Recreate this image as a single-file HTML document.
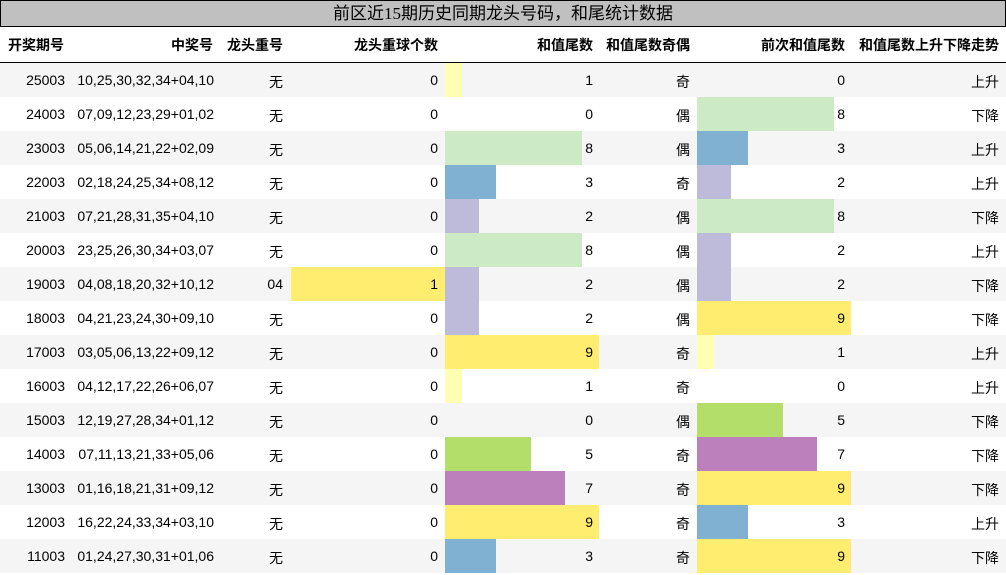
<!DOCTYPE html>
<html><head><meta charset="utf-8"><style>
*{margin:0;padding:0;box-sizing:border-box}
body{width:1006px;height:574px;overflow:hidden;background:#fff;font-family:"Liberation Sans","Noto Sans CJK SC",sans-serif;font-size:14px;color:#000;position:relative}
.title{position:absolute;left:0;top:0;width:1006px;height:27px;background:#c0c0c0;border:1px solid #000;text-align:center;font-family:"Liberation Serif","Noto Sans CJK SC",sans-serif;font-size:17px;line-height:25px}
.hdr{position:absolute;left:0;top:27px;width:1006px;height:36px;border-bottom:1px solid #000;font-weight:bold}
.row{position:absolute;left:0;width:1006px;height:34px}
.c{position:absolute;top:0;height:100%;text-align:right;padding-right:7px;line-height:34px;white-space:nowrap}
.k{top:2px}
.hdr .c{line-height:36px}
.bar{position:absolute;top:0;height:34px}
</style></head><body>
<div class="title">前区近15期历史同期龙头号码，和尾统计数据</div>
<div class="hdr">
<div class="c" style="left:0;width:72px;text-align:left;padding-left:8px">开奖期号</div>
<div class="c" style="left:72px;width:148px">中奖号</div>
<div class="c" style="left:220px;width:70px">龙头重号</div>
<div class="c" style="left:290px;width:155px">龙头重球个数</div>
<div class="c" style="left:445px;width:155px">和值尾数</div>
<div class="c" style="left:600px;width:97px">和值尾数奇偶</div>
<div class="c" style="left:697px;width:155px">前次和值尾数</div>
<div class="c" style="left:852px;width:154px">和值尾数上升下降走势</div>
</div>
<div id="rows"></div>
<script>
var d=[["25003","10,25,30,32,34+04,10","无",0,1,"奇",0,"上升"],
["24003","07,09,12,23,29+01,02","无",0,0,"偶",8,"下降"],
["23003","05,06,14,21,22+02,09","无",0,8,"偶",3,"上升"],
["22003","02,18,24,25,34+08,12","无",0,3,"奇",2,"上升"],
["21003","07,21,28,31,35+04,10","无",0,2,"偶",8,"下降"],
["20003","23,25,26,30,34+03,07","无",0,8,"偶",2,"上升"],
["19003","04,08,18,20,32+10,12","04",1,2,"偶",2,"下降"],
["18003","04,21,23,24,30+09,10","无",0,2,"偶",9,"下降"],
["17003","03,05,06,13,22+09,12","无",0,9,"奇",1,"上升"],
["16003","04,12,17,22,26+06,07","无",0,1,"奇",0,"上升"],
["15003","12,19,27,28,34+01,12","无",0,0,"偶",5,"下降"],
["14003","07,11,13,21,33+05,06","无",0,5,"奇",7,"下降"],
["13003","01,16,18,21,31+09,12","无",0,7,"奇",9,"下降"],
["12003","16,22,24,33,34+03,10","无",0,9,"奇",3,"上升"],
["11003","01,24,27,30,31+01,06","无",0,3,"奇",9,"下降"]];
var col={1:"#ffffb3",2:"#bebada",3:"#80b1d3",5:"#b3de69",7:"#bc80bd",8:"#ccebc5",9:"#ffed6f"};
var h="";
d.forEach(function(r,i){
var y=63+i*34;
h+='<div class="row" style="top:'+y+'px;background:'+(i%2==0?'#f5f5f5':'#fff')+'">';
if(r[3]>0)h+='<div class="bar" style="left:291px;width:154px;background:#ffed6f"></div>';
if(r[4]>0)h+='<div class="bar" style="left:445px;width:'+Math.round(r[4]*17.1)+'px;background:'+col[r[4]]+'"></div>';
if(r[6]>0)h+='<div class="bar" style="left:697px;width:'+Math.round(r[6]*17.1)+'px;background:'+col[r[6]]+'"></div>';
h+='<div class="c" style="left:0;width:72px">'+r[0]+'</div>';
h+='<div class="c" style="left:72px;width:148px;padding-right:6px">'+r[1]+'</div>';
h+='<div class="c'+(r[2]=="无"?' k':'')+'" style="left:220px;width:70px">'+r[2]+'</div>';
h+='<div class="c" style="left:290px;width:155px">'+r[3]+'</div>';
h+='<div class="c" style="left:445px;width:155px">'+r[4]+'</div>';
h+='<div class="c k" style="left:600px;width:97px">'+r[5]+'</div>';
h+='<div class="c" style="left:697px;width:155px">'+r[6]+'</div>';
h+='<div class="c k" style="left:852px;width:154px">'+r[7]+'</div>';
h+='</div>';});
document.getElementById("rows").innerHTML=h;
</script>
</body></html>
